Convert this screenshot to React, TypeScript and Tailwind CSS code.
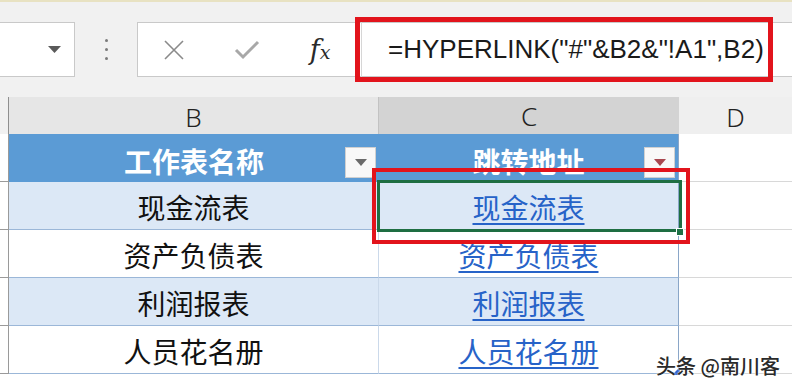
import React from 'react';

const rows = [
  { name: '现金流表', band: true },
  { name: '资产负债表', band: false },
  { name: '利润报表', band: true },
  { name: '人员花名册', band: false },
];

const cjk = "font-['Noto_Sans_CJK_SC',sans-serif]";

const FilterButton: React.FC<{ color: string }> = ({ color }) => (
  <div className="absolute right-[3px] top-[13px] w-[31px] h-[31px] bg-[#f8f8f8] border border-[#d0d0d0] flex items-center justify-center">
    <svg width="12" height="8" viewBox="0 0 12 8">
      <path d="M0 0 L12 0 L6 7 Z" fill={color} />
    </svg>
  </div>
);

export default function App() {
  return (
    <div className={`relative w-[792px] h-[382px] overflow-hidden bg-white ${cjk}`}>
      <div className="h-[2px] bg-[#e8e2c2]" />

      {/* formula bar */}
      <div className="h-[95px] bg-[#f1f1f1] flex items-start pt-[20px]">
        <div className="w-[75px] h-[55px] bg-white border border-l-0 border-[#c9c9c9] flex items-center justify-end pr-[13px]">
          <svg width="13" height="8" viewBox="0 0 13 8">
            <path d="M0 0 L13 0 L6.5 7 Z" fill="#5a5a5a" />
          </svg>
        </div>
        <div className="w-[62px] h-[55px] flex flex-col items-center justify-center gap-[6px]">
          <span className="w-[3px] h-[3px] rounded-full bg-[#7a7a7a]" />
          <span className="w-[3px] h-[3px] rounded-full bg-[#7a7a7a]" />
          <span className="w-[3px] h-[3px] rounded-full bg-[#7a7a7a]" />
        </div>
        <div className="flex-1 h-[55px] bg-white border border-r-0 border-[#c9c9c9] flex items-center">
          <div className="w-[72px] flex justify-center">
            <svg width="22" height="22" viewBox="0 0 22 22">
              <path d="M2 2 L20 20 M20 2 L2 20" stroke="#8a8a8a" strokeWidth="1.6" />
            </svg>
          </div>
          <div className="w-[74px] flex justify-center">
            <svg width="26" height="20" viewBox="0 0 26 20">
              <path d="M2 10 L9 17 L24 2" stroke="#a8a8a8" strokeWidth="3" fill="none" />
            </svg>
          </div>
          <div className="w-[72px] flex justify-center items-baseline text-[#2a2a2a] font-['DejaVu_Serif',serif] italic">
            <span className="text-[27px] leading-none">f</span>
            <span className="text-[19px] leading-none">x</span>
          </div>
          <div className="ml-[5px] w-px h-[55px] bg-[#d6d6d6]" />
          <div className="pl-[26px] text-[26px] text-[#1a1a1a] font-['Liberation_Sans',sans-serif] whitespace-nowrap">
            =HYPERLINK("#"&amp;B2&amp;"!A1",B2)
          </div>
        </div>
      </div>

      {/* column headers */}
      <div className="grid grid-cols-[9px_370px_300px_113px] h-[37px] text-[26px] font-['Noto_Sans',sans-serif] font-light text-[#222]">
        <div className="bg-[#f1f1f1] border-r border-b border-[#8f8f8f]" />
        <div className="bg-[#e6e6e6] border-r border-b border-[#c2c2c2] flex items-center justify-center">B</div>
        <div className="bg-[#d3d3d3] border-b-[3px] border-[#1f6b43] flex items-center justify-center">C</div>
        <div className="bg-[#efefef] border-b border-[#d0d0d0] flex items-center justify-center">D</div>
      </div>

      {/* table header */}
      <div className="grid grid-cols-[9px_370px_300px_113px] h-[48px] text-[28px] font-bold text-white">
        <div className="bg-white border-r border-b border-[#9a9a9a]" />
        <div className="relative bg-[#5b9bd5] flex items-center justify-center pt-[6px]">
          工作表名称
          <FilterButton color="#6a6a6a" />
        </div>
        <div className="relative bg-[#5b9bd5] border-r border-[#8aa6c8] flex items-center justify-center pt-[6px]">
          跳转地址
          <FilterButton color="#a8474f" />
        </div>
        <div className="bg-white border-b border-[#d8d8d8]" />
      </div>

      {/* data rows */}
      {rows.map((r) => (
        <div key={r.name} className="grid grid-cols-[9px_370px_300px_113px] h-[48px] text-[28px]">
          <div className="bg-white border-r border-b border-[#9a9a9a]" />
          <div className={`${r.band ? 'bg-[#dce8f6]' : 'bg-white'} border-r border-b border-r-[#cbd9ea] border-b-[#9bb7d8] flex items-center justify-center pt-[2px] text-[#111]`}>
            {r.name}
          </div>
          <div className={`${r.band ? 'bg-[#dce8f6]' : 'bg-white'} border-r border-b border-r-[#8aa6c8] border-b-[#9bb7d8] flex items-center justify-center pt-[2px]`}>
            <span className="text-[#2763c8] underline decoration-[2px] underline-offset-[4px]">{r.name}</span>
          </div>
          <div className="bg-white border-b border-[#d8d8d8]" />
        </div>
      ))}

      {/* selection */}
      <div className="absolute left-[377px] top-[180px] w-[305px] h-[52px] border-[3px] border-[#1e6e42]" />
      <div className="absolute left-[676px] top-[228px] w-[8px] h-[8px] bg-[#1e7145] border border-white" />

      {/* annotations */}
      <div className="absolute left-[355px] top-[17px] w-[418px] h-[65px] border-[5px] border-[#e2141c]" />
      <div className="absolute left-[372px] top-[168px] w-[318px] h-[76px] border-4 border-[#e2141c]" />

      {/* table resize handle */}
      <svg className="absolute left-[672px] top-[367px]" width="8" height="8" viewBox="0 0 8 8">
        <path d="M8 0 L8 8 L0 8 Z" fill="#2b5fd0" />
      </svg>

      <div className="absolute left-[656px] top-[351px] text-[20px] font-medium text-[#2a2a2a] whitespace-nowrap [text-shadow:0_0_2px_#fff,0_0_2px_#fff]">
        头条 @南川客
      </div>
    </div>
  );
}
